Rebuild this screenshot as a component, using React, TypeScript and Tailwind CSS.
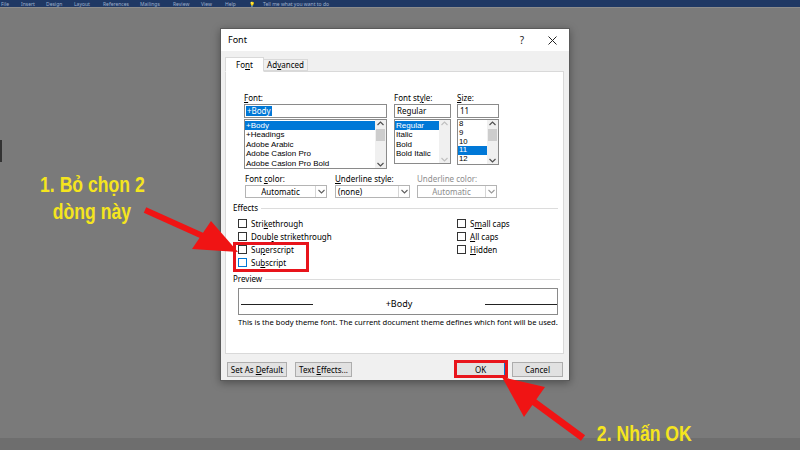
import React from "react";

const U = ({ children }: { children: React.ReactNode }) => <span className="underline underline-offset-[1px]">{children}</span>;

function ScrollBar({ thumb, disabled }: { thumb: boolean; disabled?: boolean }) {
  return (
    <div className="w-[11px] h-full flex flex-col items-center justify-between bg-[#f0f0f0] py-[1px]">
      <svg width="7" height="5" viewBox="0 0 7 5"><path d="M0.5 4 L3.5 1 L6.5 4" fill="none" stroke={disabled ? "#c0c0c0" : "#505050"} strokeWidth="1.2" /></svg>
      <div className="flex-1 w-full flex flex-col pt-[3px]">
        {thumb && <div className="mx-[1px] h-[12px] bg-[#cdcdcd]" />}
      </div>
      <svg width="7" height="5" viewBox="0 0 7 5"><path d="M0.5 1 L3.5 4 L6.5 1" fill="none" stroke={disabled ? "#c0c0c0" : "#505050"} strokeWidth="1.2" /></svg>
    </div>
  );
}

function ListBox({ items, sel, h, row, pt, thumb, disabled }: { items: string[]; sel: number; h: string; row: string; pt: string; thumb: boolean; disabled?: boolean }) {
  return (
    <div className={`mt-[1px] border border-[#8a8a8a] bg-white flex ${h}`}>
      <div className={`flex-1 ${pt} overflow-hidden font-['Liberation_Sans',sans-serif]`}>
        {items.map((t, i) => (
          <div key={t} className={`${row} pl-[1px] flex items-center whitespace-nowrap ${i === sel ? "bg-[#0078d7] text-white" : "text-black"}`}>{t}</div>
        ))}
      </div>
      <ScrollBar thumb={thumb} disabled={disabled} />
    </div>
  );
}

function Drop({ w, text, center, gray }: { w: string; text: string; center?: boolean; gray?: boolean }) {
  return (
    <div className={`${w} h-[13px] border border-[#b4b4b4] bg-white flex items-center`}>
      <div className={`flex-1 text-[8px] leading-[11px] ${center ? "text-center" : "pl-[2px]"} ${gray ? "text-[#8d8d8d]" : "text-black"}`}>{text}</div>
      <div className="w-[11px] h-[11px] border-l border-[#d6d6d6] flex items-center justify-center">
        <svg width="7" height="5" viewBox="0 0 7 5"><path d="M0.5 1 L3.5 4 L6.5 1" fill="none" stroke={gray ? "#9a9a9a" : "#606060"} strokeWidth="1.1" /></svg>
      </div>
    </div>
  );
}

function Check({ label, blue }: { label: React.ReactNode; blue?: boolean }) {
  return (
    <div className="h-[13px] flex items-center">
      <div className={`w-[9px] h-[9px] bg-white border ${blue ? "border-[#0078d7]" : "border-[#333333]"}`} />
      <div className="ml-[4px] text-[8px] leading-[12px] text-black whitespace-nowrap">{label}</div>
    </div>
  );
}

function Btn({ w, children, ok }: { w: string; children: React.ReactNode; ok?: boolean }) {
  return (
    <div className={`${w} h-[15px] border ${ok ? "border-[#0078d7]" : "border-[#adadad]"} bg-[#e1e1e1] flex items-center justify-center text-[8px] text-black`}>
      <span className="whitespace-nowrap">{children}</span>
    </div>
  );
}

export default function App() {
  const tabs: [string, string][] = [
    ["File", "w-[20px]"], ["Insert", "w-[25px]"], ["Design", "w-[28px]"], ["Layout", "w-[29px]"],
    ["References", "w-[37px]"], ["Mailings", "w-[33px]"], ["Review", "w-[28px]"], ["View", "w-[24px]"],
    ["Help", "w-[24px]"], ["💡", "w-[14px]"],
  ];
  return (
    <div className="relative w-[800px] h-[450px] overflow-hidden bg-[#7a7a7a] font-['Noto_Sans',sans-serif] flex flex-col">
      {/* ribbon remnant */}
      <div className="h-[7px] bg-[#1f3864] flex items-center">
        <div className="flex items-center text-[5px] leading-[6px] text-[#9fb0cc] pl-[1px]">
          {tabs.map(([t, w]) => <span key={t} className={w}>{t}</span>)}
          <span>Tell me what you want to do</span>
        </div>
      </div>
      <div className="h-[1px] bg-[#8c8c8c]" />
      <div className="flex-1 bg-[#7a7a7a] relative">
        <div className="absolute left-0 top-[132px] w-[2px] h-[22px] bg-[#333]" />
      </div>
      <div className="h-[12px] bg-[#6e6e6e]" />

      {/* Dialog window */}
      <div className="absolute left-[220px] top-[28px] w-[350px] h-[353px] bg-[#f0f0f0] border border-[#5a5a5a] shadow-[0_2px_8px_rgba(0,0,0,0.35)] flex flex-col">
        <div className="h-[22px] bg-white flex items-center pl-[7px] pr-[12px]">
          <span className="text-[9px] text-black flex-1">Font</span>
          <span className="text-[10px] text-[#222] mr-[24px]">?</span>
          <svg width="9" height="9" viewBox="0 0 9 9"><path d="M0.5 0.5 L8.5 8.5 M8.5 0.5 L0.5 8.5" stroke="#222" strokeWidth="1" /></svg>
        </div>
        <div className="flex-1 flex flex-col pl-[4px] pr-[5px] pt-[6px]">
          <div className="flex items-end h-[15px] relative z-10">
            <div className="w-[39px] h-[15px] bg-white border border-[#d9d9d9] border-b-white flex items-center justify-center text-[8px] text-black">Fo<U>n</U>t</div>
            <div className="w-[44px] h-[12px] bg-[#f0f0f0] border border-[#d9d9d9] border-l-0 flex items-center justify-center text-[8px] text-black mb-[1px]">Ad<U>v</U>anced</div>
          </div>
          <div className="-mt-[1px] h-[283px] bg-white border border-[#d9d9d9] flex flex-col pt-[20px]">
            {/* Row 1 */}
            <div className="flex ml-[18px]">
              <div className="w-[143px] flex flex-col">
                <div className="h-[12px] text-[8px] leading-[12px] text-black"><U>F</U>ont:</div>
                <div className="h-[14px] border border-[#8a8a8a] bg-white flex items-center pl-[1px]">
                  <span className="bg-[#0078d7] text-white text-[8px] leading-[10px] px-[1px]">+Body</span>
                </div>
                <ListBox items={["+Body", "+Headings", "Adobe Arabic", "Adobe Caslon Pro", "Adobe Caslon Pro Bold"]} sel={0} h="h-[50px]" row="h-[9.4px] leading-[9.4px] text-[8px]" pt="pt-[1px]" thumb />
              </div>
              <div className="w-[57px] flex flex-col ml-[7px]">
                <div className="h-[12px] text-[8px] leading-[12px] text-black">Font st<U>y</U>le:</div>
                <div className="h-[14px] border border-[#8a8a8a] bg-white flex items-center pl-[2px] text-[8px] text-black">Regular</div>
                <ListBox items={["Regular", "Italic", "Bold", "Bold Italic"]} sel={0} h="h-[45px]" row="h-[9.4px] leading-[9.4px] text-[8px]" pt="pt-[1px]" thumb={false} disabled />
              </div>
              <div className="w-[42px] flex flex-col ml-[6px]">
                <div className="h-[12px] text-[8px] leading-[12px] text-black"><U>S</U>ize:</div>
                <div className="h-[14px] border border-[#8a8a8a] bg-white flex items-center pl-[2px] text-[8px] text-black">11</div>
                <ListBox items={["8", "9", "10", "11", "12"]} sel={3} h="h-[46px]" row="h-[8.8px] leading-[8.8px] text-[7.8px]" pt="pt-0" thumb />
              </div>
            </div>
            {/* Row 2 */}
            <div className="flex ml-[19px] mt-[4px]">
              <div className="w-[82px] flex flex-col">
                <div className="h-[12px] text-[8px] leading-[12px] text-black">Font <U>c</U>olor:</div>
                <Drop w="w-[82px]" text="Automatic" center />
              </div>
              <div className="w-[75px] flex flex-col ml-[8px]">
                <div className="h-[12px] text-[8px] leading-[12px] text-black"><U>U</U>nderline style:</div>
                <Drop w="w-[75px]" text="(none)" />
              </div>
              <div className="w-[80px] flex flex-col ml-[7px]">
                <div className="h-[12px] text-[8px] leading-[12px] text-[#8d8d8d]">Underline color:</div>
                <Drop w="w-[80px]" text="Automatic" center gray />
              </div>
            </div>
            {/* Effects */}
            <div className="flex items-center ml-[7px] mr-[5px] mt-[4px] h-[12px]">
              <span className="text-[8px] text-black">Effects</span>
              <div className="flex-1 h-[1px] bg-[#dcdcdc] ml-[3px]" />
            </div>
            <div className="flex ml-[12px] mt-[3px]">
              <div className="w-[219px] flex flex-col">
                <Check label={<>Stri<U>k</U>ethrough</>} />
                <Check label={<>Doub<U>l</U>e strikethrough</>} />
                <Check label={<>Su<U>p</U>erscript</>} />
                <Check label={<>Su<U>b</U>script</>} blue />
              </div>
              <div className="flex flex-col">
                <Check label={<>S<U>m</U>all caps</>} />
                <Check label={<><U>A</U>ll caps</>} />
                <Check label={<><U>H</U>idden</>} />
              </div>
            </div>
            {/* Preview */}
            <div className="flex items-center ml-[7px] mr-[3px] mt-[4px] h-[12px]">
              <span className="text-[8px] text-black">Preview</span>
              <div className="flex-1 h-[1px] bg-[#dcdcdc] ml-[3px]" />
            </div>
            <div className="ml-[12px] mt-[3px] w-[320px] h-[27px] border border-[#8a8a8a] bg-white flex items-end pb-[9px]">
              <div className="w-[72px] h-[1px] bg-[#222] ml-[2px]" />
              <div className="flex-1 text-center text-[9px] leading-[10px] text-black -mb-[4px]">+Body</div>
              <div className="w-[72px] h-[1px] bg-[#222]" />
            </div>
            <div className="ml-[12px] mt-[1px] text-[7.6px] leading-[12px] text-black whitespace-nowrap">This is the body theme font. The current document theme defines which font will be used.</div>
          </div>
          {/* Buttons */}
          <div className="flex items-center mt-[8px] ml-[2px]">
            <Btn w="w-[60px]">Set As <U>D</U>efault</Btn>
            <div className="ml-[8px]"><Btn w="w-[57px]">Text <U>E</U>ffects...</Btn></div>
            <div className="flex-1" />
            <Btn w="w-[49px]" ok>OK</Btn>
            <div className="ml-[7px] mr-[1px]"><Btn w="w-[51px]">Cancel</Btn></div>
          </div>
        </div>
      </div>

      {/* Annotation boxes */}
      <div className="absolute left-[233px] top-[242px] w-[76px] h-[30px] border-[3px] border-[#e8141b]" />
      <div className="absolute left-[454px] top-[360px] w-[54px] h-[18px] border-[3px] border-[#e8141b]" />

      {/* Arrows */}
      <svg className="absolute left-0 top-0" width="800" height="450" viewBox="0 0 800 450">
        <line x1="145" y1="210" x2="205" y2="237" stroke="#f01414" strokeWidth="6" />
        <polygon points="238,252 192,249 211,221" fill="#f01414" />
        <line x1="583" y1="438" x2="530" y2="399" stroke="#f01414" strokeWidth="7" />
        <polygon points="502,377 545,387 524,417" fill="#f01414" />
      </svg>

      {/* Annotation text */}
      <div className="absolute left-[32px] top-[171px] w-[120px] flex flex-col items-center text-[#f5e51e] font-['Liberation_Sans',sans-serif] font-bold text-[22px] leading-[27px]">
        <span className="scale-x-[0.8] whitespace-nowrap">1. Bỏ chọn 2</span>
        <span className="scale-x-[0.8] whitespace-nowrap">dòng này</span>
      </div>
      <div className="absolute left-[584px] top-[420px] w-[120px] flex justify-center text-[#f5e51e] font-['Liberation_Sans',sans-serif] font-bold text-[22px] leading-[28px]">
        <span className="scale-x-[0.8] whitespace-nowrap">2. Nhấn OK</span>
      </div>
    </div>
  );
}
